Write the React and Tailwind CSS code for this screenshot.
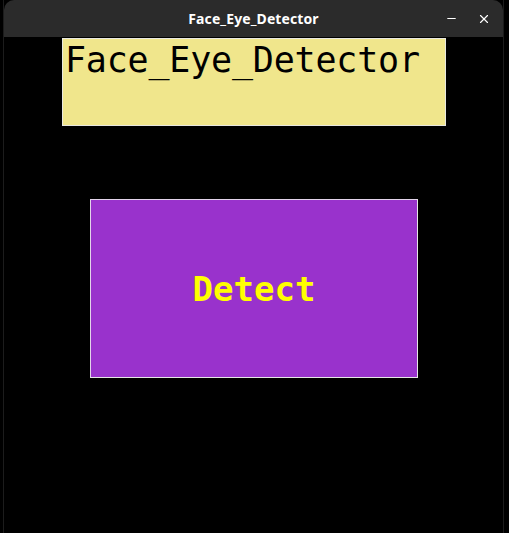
import { X, Minus } from "lucide-react";

const App = () => {
  return (
    <div className="w-[509px] h-[533px] bg-black overflow-hidden">
      <div className="ml-[3px] mr-[5px] h-full flex flex-col border-x border-[#1c1c1c]">
        <div className="relative h-[37px] bg-[#2b2b2b] rounded-t-[10px] flex items-center justify-center shrink-0">
          <span className="text-white text-[14px] font-bold font-['Noto_Sans',sans-serif] tracking-[0.1px]">
            Face_Eye_Detector
          </span>
          <div className="absolute right-[8px] top-0 h-full flex items-center gap-[19px]">
            <Minus className="w-[13px] h-[13px] text-white" strokeWidth={2} />
            <X className="w-[14px] h-[14px] text-white mr-[4px]" strokeWidth={2} />
          </div>
        </div>
        <div className="flex-1 bg-black">
          <div className="ml-[58px] mt-[1px] w-[384px] h-[88px] bg-[#f0e68c] border border-[#e8e8e0] px-[2px]">
            <div className="font-['DejaVu_Sans_Mono',monospace] text-[35px] leading-[43px] text-black tracking-[-0.2px]">
              Face_Eye_Detector
            </div>
          </div>
          <button className="ml-[86px] mt-[73px] w-[328px] h-[179px] bg-[#9932cc] border border-t-[#e2d4ea] border-l-[#e2d4ea] border-b-[#e6e6e6] border-r-[#e6e6e6] flex items-center justify-center">
            <span className="font-['DejaVu_Sans_Mono',monospace] font-bold text-[34px] text-[#ffff00] leading-none">
              Detect
            </span>
          </button>
        </div>
      </div>
    </div>
  );
};

export default App;
